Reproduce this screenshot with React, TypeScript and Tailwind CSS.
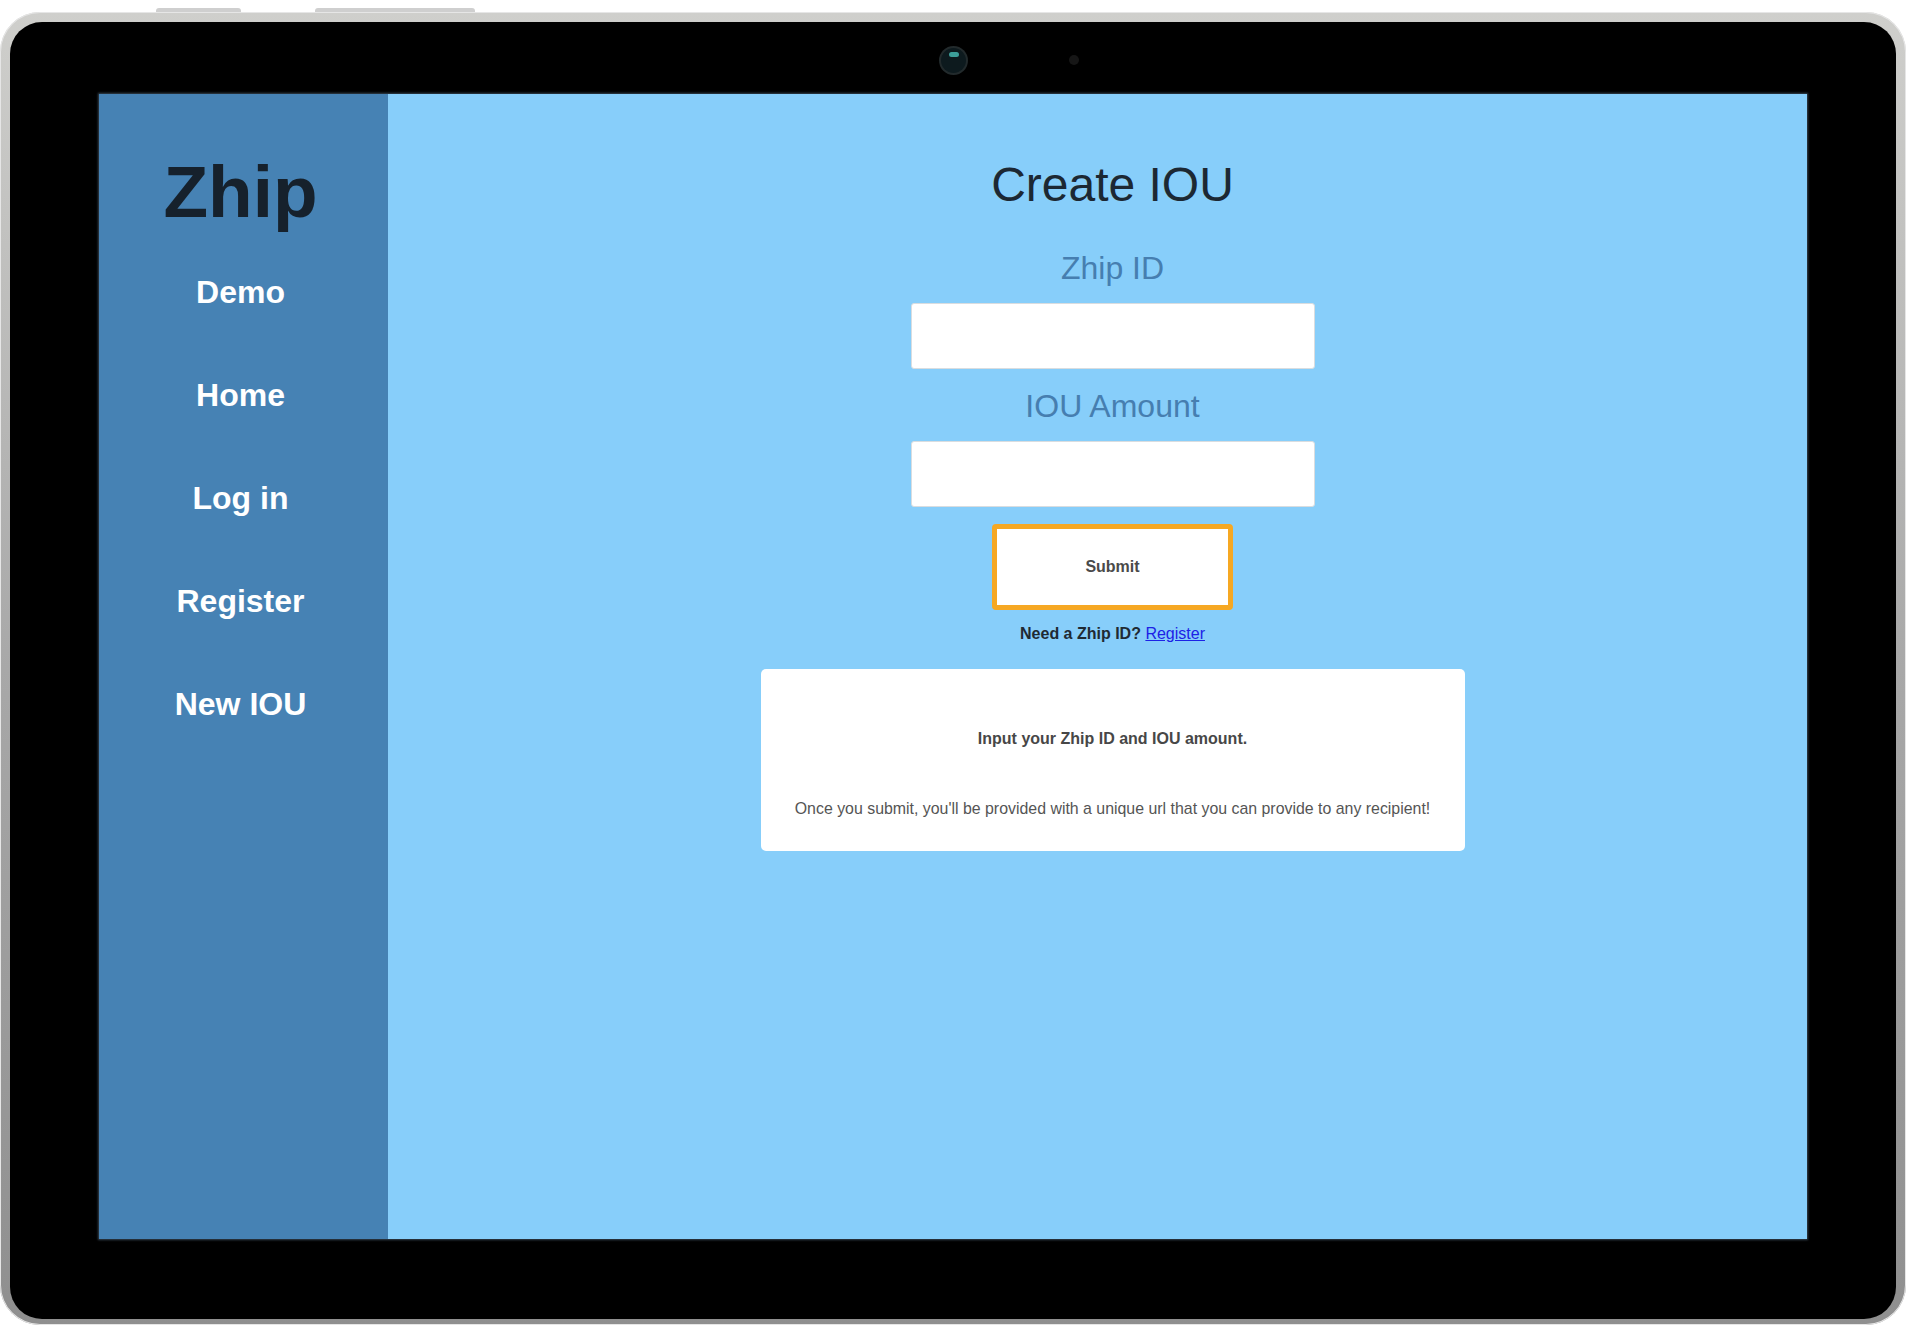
const sans = "font-['Liberation_Sans',Arial,sans-serif]"

const navItems = ["Demo", "Home", "Log in", "Register", "New IOU"]

function Sidebar() {
  return (
    <aside className="flex w-[289px] shrink-0 flex-col items-center bg-[#4682b4] pt-[58px] pr-[6px]">
      <h1 className="text-[73px] font-bold leading-[80px] text-[#16212c]">Zhip</h1>
      <nav className="mt-[40px] flex flex-col items-center gap-[63px]">
        {navItems.map((item) => (
          <a key={item} href="#" className="text-[32px] font-bold leading-[40px] text-white">
            {item}
          </a>
        ))}
      </nav>
    </aside>
  )
}

function Field({ label, className }: { label: string; className?: string }) {
  return (
    <div className={"flex flex-col items-center " + (className ?? "")}>
      <label className="text-[32px] leading-[40px] text-[#467eb0]">{label}</label>
      <input
        type="text"
        className="mt-[15px] h-[66px] w-[404px] rounded-[3px] border border-[#d9dde0] bg-white outline-none"
      />
    </div>
  )
}

function CreateIou() {
  return (
    <main className="flex flex-1 flex-col items-center bg-[#87cefa] pt-[61px] pl-[30px]">
      <h2 className="text-[48px] leading-[60px] text-[#1c2833]">Create IOU</h2>
      <Field label="Zhip ID" className="mt-[33px]" />
      <Field label="IOU Amount" className="mt-[17px]" />
      <button className="mt-[17px] h-[86px] w-[241px] rounded-[4px] border-[5px] border-[#f6a823] bg-white text-[16px] font-bold text-[#4a4a4a]">
        Submit
      </button>
      <p className="mt-[14px] text-[16px] font-bold leading-[20px] text-[#1f2a33]">
        Need a Zhip ID?{" "}
        <a href="#" className="font-normal text-[#1c22e6] underline">
          Register
        </a>
      </p>
      <div className="mt-[25px] flex h-[182px] w-[704px] flex-col items-center rounded-[5px] bg-white pt-[60px]">
        <p className="text-[16px] font-bold leading-[20px] text-[#474747]">Input your Zhip ID and IOU amount.</p>
        <p className="mt-[50px] text-[15.9px] leading-[20px] text-[#555555]">
          Once you submit, you'll be provided with a unique url that you can provide to any recipient!
        </p>
      </div>
    </main>
  )
}

export default function App() {
  return (
    <div className={"relative h-[1326px] w-[1910px] bg-white " + sans}>
      {/* top edge buttons */}
      <div className="absolute left-[156px] top-[8px] h-[6px] w-[85px] rounded-t-[3px] bg-[#cfcfcf]" />
      <div className="absolute left-[315px] top-[8px] h-[6px] w-[160px] rounded-t-[3px] bg-[#cfcfcf]" />

      <div className="absolute left-0 top-[12px] h-[1313px] w-[1906px] rounded-[40px] bg-gradient-to-b from-[#cfcfcc] via-[#a8a8a8] to-[#8f8f8f] px-[10px] pt-[10px] pb-[6px] shadow-[inset_0_0_0_1px_#e6e6e6]">
        <div className="relative flex h-full w-full flex-col rounded-[32px] bg-black px-[89px] pt-[72px] pb-[80px]">
          {/* camera + sensor */}
          <div className="absolute left-[931px] top-[26px] flex h-[25px] w-[25px] items-start justify-center rounded-full bg-[#0d1a1e] ring-2 ring-[#222a2c]">
            <div className="mt-[4px] h-[5px] w-[10px] rounded-full bg-[#3c9e99]" />
          </div>
          <div className="absolute left-[1059px] top-[33px] h-[10px] w-[10px] rounded-full bg-[#161616]" />

          <div className="flex flex-1 overflow-hidden shadow-[0_0_2px_1px_rgba(110,140,165,0.5)]">
            <Sidebar />
            <CreateIou />
          </div>
        </div>
      </div>
    </div>
  )
}
